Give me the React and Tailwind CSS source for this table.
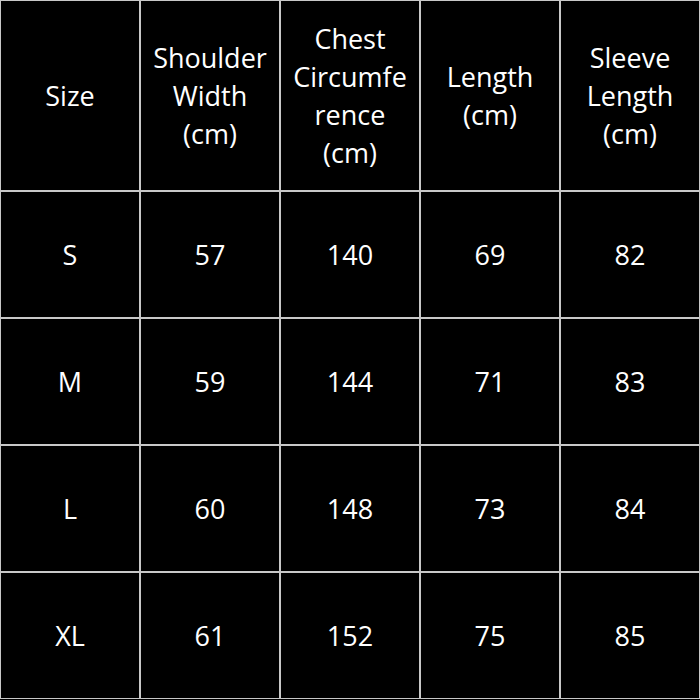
import React from 'react';

const header = [
  ['Size'],
  ['Shoulder', 'Width', '(cm)'],
  ['Chest', 'Circumfe', 'rence', '(cm)'],
  ['Length', '(cm)'],
  ['Sleeve', 'Length', '(cm)'],
];

const rows = [
  ['S', '57', '140', '69', '82'],
  ['M', '59', '144', '71', '83'],
  ['L', '60', '148', '73', '84'],
  ['XL', '61', '152', '75', '85'],
];

export default function App() {
  return (
    <div className="w-[700px] h-[700px] bg-black" style={{ fontFamily: '"Open Sans", "Noto Sans", sans-serif' }}>
      <div className="grid grid-cols-5 grid-rows-[189px_125px_125px_125px_125px] gap-[2px] p-[1px] bg-[#c8c8c8] text-white text-[27px] leading-[38px]">
        {header.map((lines, i) => (
          <div key={i} className="bg-black flex flex-col items-center justify-center text-center">
            {lines.map((l) => (
              <span key={l}>{l}</span>
            ))}
          </div>
        ))}
        {rows.map((r) =>
          r.map((v, j) => (
            <div key={r[0] + j} className="bg-black flex items-center justify-center">
              {v}
            </div>
          ))
        )}
      </div>
    </div>
  );
}
